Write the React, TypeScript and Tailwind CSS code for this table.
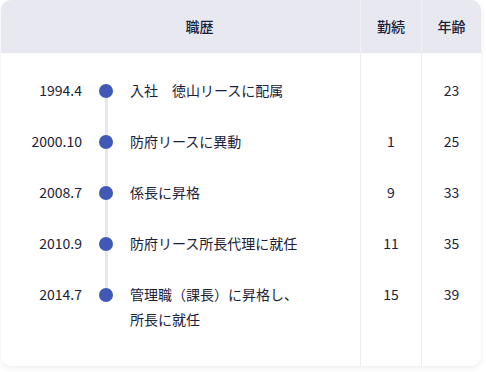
import React from "react";

interface CareerRow {
  date: string;
  lines: string[];
  years: string;
  age: string;
}

const rows: CareerRow[] = [
  { date: "1994.4", lines: ["入社　徳山リースに配属"], years: "", age: "23" },
  { date: "2000.10", lines: ["防府リースに異動"], years: "1", age: "25" },
  { date: "2008.7", lines: ["係長に昇格"], years: "9", age: "33" },
  { date: "2010.9", lines: ["防府リース所長代理に就任"], years: "11", age: "35" },
  { date: "2014.7", lines: ["管理職（課長）に昇格し、", "所長に就任"], years: "15", age: "39" },
];

export default function App() {
  return (
    <div
      className="w-[486px] h-[372px] bg-white pl-px"
      style={{ fontFamily: '"Noto Sans CJK JP", "Noto Sans", sans-serif' }}
    >
      <div className="w-[480px] h-[366px] rounded-[10px] bg-white shadow-[0_2px_6px_rgba(20,30,60,0.08)] overflow-hidden flex flex-col text-[14px] text-[#1c2138]">
        {/* Header */}
        <div className="grid grid-cols-[359px_61px_60px] h-[55px] bg-[#e8e9f0] font-medium">
          <div className="flex items-center justify-center pl-[38px]">職歴</div>
          <div className="flex items-center justify-center border-l border-[#f1f1f5]">勤続</div>
          <div className="flex items-center justify-center border-l border-[#f1f1f5]">年齢</div>
        </div>

        {/* Body */}
        <div className="flex-1 flex flex-col">
          {rows.map((row, i) => {
            const first = i === 0;
            const last = i === rows.length - 1;
            const pad = first ? "pt-[25px]" : "pt-[13px]";
            return (
              <div
                key={row.date}
                className={`grid grid-cols-[359px_61px_60px] ${last ? "flex-1" : ""}`}
              >
                <div className="flex">
                  <div className={`w-[81px] text-right leading-[25px] ${pad}`}>{row.date}</div>
                  <div className="w-[48px] flex flex-col items-center">
                    <div
                      className={`w-[3px] ${first ? "h-[30.5px]" : "h-[18.5px] bg-[#e6e6ec]"}`}
                    />
                    <div className="w-[14px] h-[14px] rounded-full bg-[#4059b5] shrink-0" />
                    <div className={`w-[3px] flex-1 ${last ? "" : "bg-[#e6e6ec]"}`} />
                  </div>
                  <div className={`leading-[25px] ${pad} ${last ? "pb-[34px]" : "pb-[13px]"}`}>
                    {row.lines.map((l) => (
                      <div key={l}>{l}</div>
                    ))}
                  </div>
                </div>
                <div className={`border-l border-[#ececf2] text-center leading-[25px] ${pad}`}>
                  {row.years}
                </div>
                <div className={`border-l border-[#ececf2] text-center leading-[25px] ${pad}`}>
                  {row.age}
                </div>
              </div>
            );
          })}
        </div>
      </div>
    </div>
  );
}
